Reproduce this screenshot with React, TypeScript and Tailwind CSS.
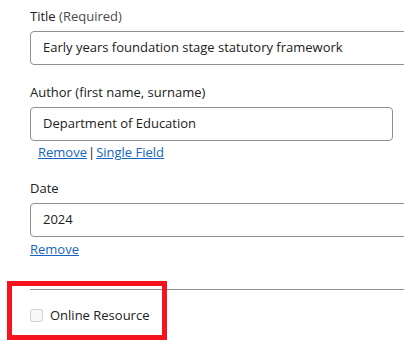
import React from 'react'

// Formulario de cita: título, autor, fecha y recurso online (resaltado).

function Field({ label, note, value, wide = true }: { label: string; note?: string; value: string; wide?: boolean }) {
  return (
    <div>
      <label className="block text-[13px] leading-5 mb-[5px] text-[#212121]">
        {label}
        {note && <span className="text-[#4a4a4a]"> {note}</span>}
      </label>
      <div
        className={`${wide ? 'w-[420px]' : 'w-[363px]'} h-[34px] flex items-center px-[12px] border border-[#8a9096] rounded-[4px] text-[13px] text-[#212121] bg-white`}
      >
        {value}
      </div>
    </div>
  )
}

export default function App() {
  return (
    <div className="relative w-[404px] h-[347px] overflow-hidden bg-white" style={{ fontFamily: '"Open Sans", sans-serif' }}>
      <div className="pl-[30px] pt-[6px]">
        <Field label="Title" note="(Required)" value="Early years foundation stage statutory framework" />

        <div className="mt-[17px]">
          <Field label="Author (first name, surname)" value="Department of Education" wide={false} />
          <div className="pl-[8px] pt-[1px] text-[13px] leading-5 text-[#212121]">
            <a href="#" className="text-[#1565c0] underline">Remove</a>
            <span className="px-[1px]">|</span>
            <a href="#" className="text-[#1565c0] underline">Single Field</a>
          </div>
        </div>

        <div className="mt-[16px]">
          <Field label="Date" value="2024" />
          <div className="pt-[2px] text-[13px] leading-5">
            <a href="#" className="text-[#1565c0] underline">Remove</a>
          </div>
        </div>

        <div className="mt-[30px] w-[420px] border-t border-[#8a9096]" />

        <label className="mt-[15px] flex items-center gap-[7px] text-[13px] leading-5 text-[#212121]">
          <input type="checkbox" disabled className="m-0 w-[13px] h-[13px]" />
          Online Resource
        </label>
      </div>

      {/* resaltado */}
      <div className="absolute left-[7px] top-[281px] w-[160px] h-[59px] border-[5px] border-[#f5141e]" />
    </div>
  )
}
